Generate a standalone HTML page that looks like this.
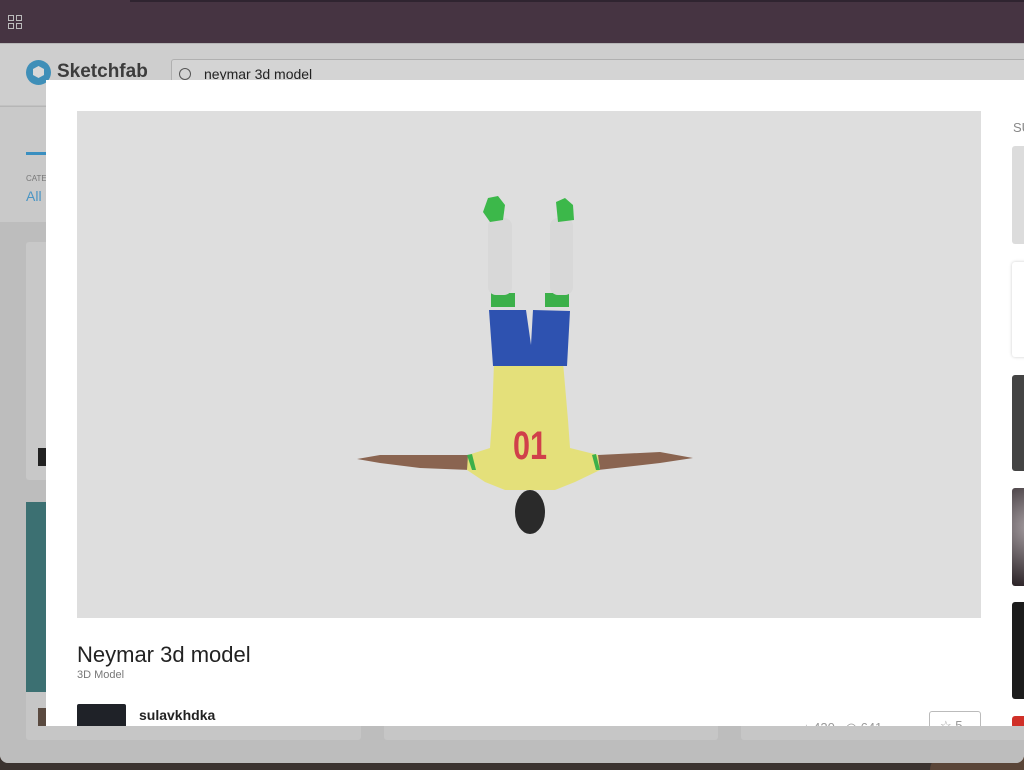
<!DOCTYPE html>
<html><head><meta charset="utf-8"><style>
*{margin:0;padding:0;box-sizing:border-box}
body{width:1024px;height:770px;overflow:hidden;background:#3a2f2a;font-family:"Liberation Sans",sans-serif;position:relative}
.abs{position:absolute}
</style></head><body>
<div class="abs" style="left:0;top:760px;width:1024px;height:10px;background:#3b3330"></div>
<div class="abs" style="left:930px;top:755px;width:94px;height:15px;background:#5a4538;border-radius:40px 0 0 0"></div>
<div class="abs" style="left:0;top:0;width:1024px;height:763px;background:#b6b6b6;border-radius:0 0 8px 8px;overflow:hidden">
  <div class="abs" style="left:0;top:0;width:1024px;height:43px;background:#463442"></div>
  <div class="abs" style="left:130px;top:0;width:900px;height:2px;background:#2f2430"></div>
  <div class="abs" style="left:8px;top:15px;width:6px;height:6px;border:1.5px solid #bbb"></div>
  <div class="abs" style="left:16px;top:15px;width:6px;height:6px;border:1.5px solid #bbb"></div>
  <div class="abs" style="left:8px;top:23px;width:6px;height:6px;border:1.5px solid #bbb"></div>
  <div class="abs" style="left:16px;top:23px;width:6px;height:6px;border:1.5px solid #bbb"></div>
  <div class="abs" style="left:0;top:44px;width:1024px;height:62px;background:#cecece;border-bottom:1px solid #c2c2c2"></div>
  <div class="abs" style="left:26px;top:60px;width:25px;height:25px;border-radius:50%;background:#3f8fb8"></div>
  <div class="abs" style="left:33px;top:66px;width:11px;height:12px;background:#d8d8d8;clip-path:polygon(50% 0,100% 25%,100% 75%,50% 100%,0 75%,0 25%)"></div>
  <div class="abs" style="left:57px;top:61px;font-size:19px;font-weight:bold;color:#3c3c3c">Sketchfab</div>
  <div class="abs" style="left:171px;top:59px;width:860px;height:30px;border:1px solid #b0b0b0;border-radius:3px;background:#d4d4d4"></div>
  <div class="abs" style="left:179px;top:68px;width:12px;height:12px;border:1.5px solid #555;border-radius:50%"></div>
  <div class="abs" style="left:204px;top:66px;font-size:14px;color:#222">neymar 3d model</div>
  <div class="abs" style="left:0;top:107px;width:1024px;height:115px;background:#c9c9c9"></div>
  <div class="abs" style="left:26px;top:152px;width:22px;height:3px;background:#3a8fc0"></div>
  <div class="abs" style="left:26px;top:174px;font-size:8px;color:#777">CATE</div>
  <div class="abs" style="left:26px;top:188px;font-size:14px;color:#4a95c4">All</div>
  <div class="abs" style="left:0;top:222px;width:1024px;height:545px;background:#bdbdbd"></div>
  <div class="abs" style="left:26px;top:242px;width:335px;height:238px;background:#c8c8c8;border-radius:3px"></div>
  <div class="abs" style="left:38px;top:448px;width:10px;height:18px;background:#222"></div>
  <div class="abs" style="left:26px;top:502px;width:335px;height:238px;background:#c6c6c6;border-radius:3px"></div>
  <div class="abs" style="left:26px;top:502px;width:22px;height:190px;background:#3c7072"></div>
  <div class="abs" style="left:38px;top:708px;width:8px;height:18px;background:#5a4a40"></div>
  <div class="abs" style="left:384px;top:502px;width:334px;height:238px;background:#c6c6c6;border-radius:3px"></div>
  <div class="abs" style="left:741px;top:502px;width:290px;height:238px;background:#c6c6c6;border-radius:3px"></div>
</div>
<div class="abs" style="left:46px;top:80px;width:978px;height:646px;background:#fff;overflow:hidden">
  <div class="abs" style="left:31px;top:31px;width:904px;height:507px;background:#dedede">
    <svg width="904" height="507" viewBox="77 111 904 507" style="position:absolute;left:0;top:0">
      <path d="M357 459 L380 455 L470 455 L470 470 L420 468 L380 463 Z" fill="#8a6450"/>
      <path d="M598 455 L660 452 L693 458 L660 463 L598 470 Z" fill="#8a6450"/>
      <ellipse cx="530" cy="512" rx="15" ry="22" fill="#2a2a2a"/>
      <path d="M494 362 L563 362 L568 420 L570 448 L598 455 L600 470 L575 482 L555 490 L505 490 L485 482 L467 470 L468 455 L490 448 L492 420 Z" fill="#e4e07a"/>
      <path d="M467 455 L472 470 L476 470 L472 454 Z M596 454 L600 470 L596 470 L592 455 Z" fill="#3cb04a"/>
      <text x="530" y="459" font-family="Liberation Sans,sans-serif" font-size="40" font-weight="bold" fill="#d0404a" text-anchor="middle" textLength="34" lengthAdjust="spacingAndGlyphs">01</text>
      <path d="M489 310 L526 310 L531 345 L533 310 L570 311 L567 366 L493 366 Z" fill="#2e52b0"/>
      <rect x="491" y="293" width="24" height="14" fill="#3cb04a"/>
      <rect x="545" y="293" width="24" height="14" fill="#3cb04a"/>
      <rect x="488" y="218" width="24" height="77" rx="8" fill="#d8d8d8"/>
      <rect x="550" y="218" width="23" height="77" rx="8" fill="#d8d8d8"/>
      <path d="M483 212 L488 198 L498 196 L505 205 L503 220 L490 222 Z" fill="#3cb84a"/>
      <path d="M556 202 L565 198 L573 205 L574 220 L558 222 Z" fill="#3cb84a"/>
    </svg>
  </div>
  <div class="abs" style="left:31px;top:562px;font-size:22px;color:#222">Neymar 3d model</div>
  <div class="abs" style="left:31px;top:589px;font-size:11px;color:#777">3D Model</div>
  <div class="abs" style="left:31px;top:624px;width:49px;height:30px;background:#1f2228;border-radius:2px"></div>
  <div class="abs" style="left:93px;top:627px;font-size:14px;font-weight:bold;color:#222">sulavkhdka</div>
  <div class="abs" style="left:757px;top:640px;font-size:13px;color:#999">↓ 420 &nbsp; ◎ 641</div>
  <div class="abs" style="left:883px;top:631px;width:52px;height:24px;border:1px solid #bbb;border-radius:3px;font-size:13px;color:#999;padding:6px 0 0 10px">☆ 5</div>
  <div class="abs" style="left:967px;top:40px;font-size:13px;color:#888">SU</div>
  <div class="abs" style="left:966px;top:66px;width:20px;height:98px;background:#dcdcdc;border-radius:3px"></div>
  <div class="abs" style="left:966px;top:182px;width:20px;height:95px;background:#fff;box-shadow:0 0 3px #ccc;border-radius:3px"></div>
  <div class="abs" style="left:966px;top:295px;width:20px;height:96px;background:#444;border-radius:3px"></div>
  <div class="abs" style="left:966px;top:408px;width:20px;height:98px;background:radial-gradient(circle at 100% 40%,#a8a0a4,#2a2226);border-radius:3px"></div>
  <div class="abs" style="left:966px;top:522px;width:20px;height:97px;background:#1c1c1c;border-radius:3px"></div>
  <div class="abs" style="left:966px;top:636px;width:20px;height:12px;background:#d03028;border-radius:3px"></div>
</div>
</body></html>
